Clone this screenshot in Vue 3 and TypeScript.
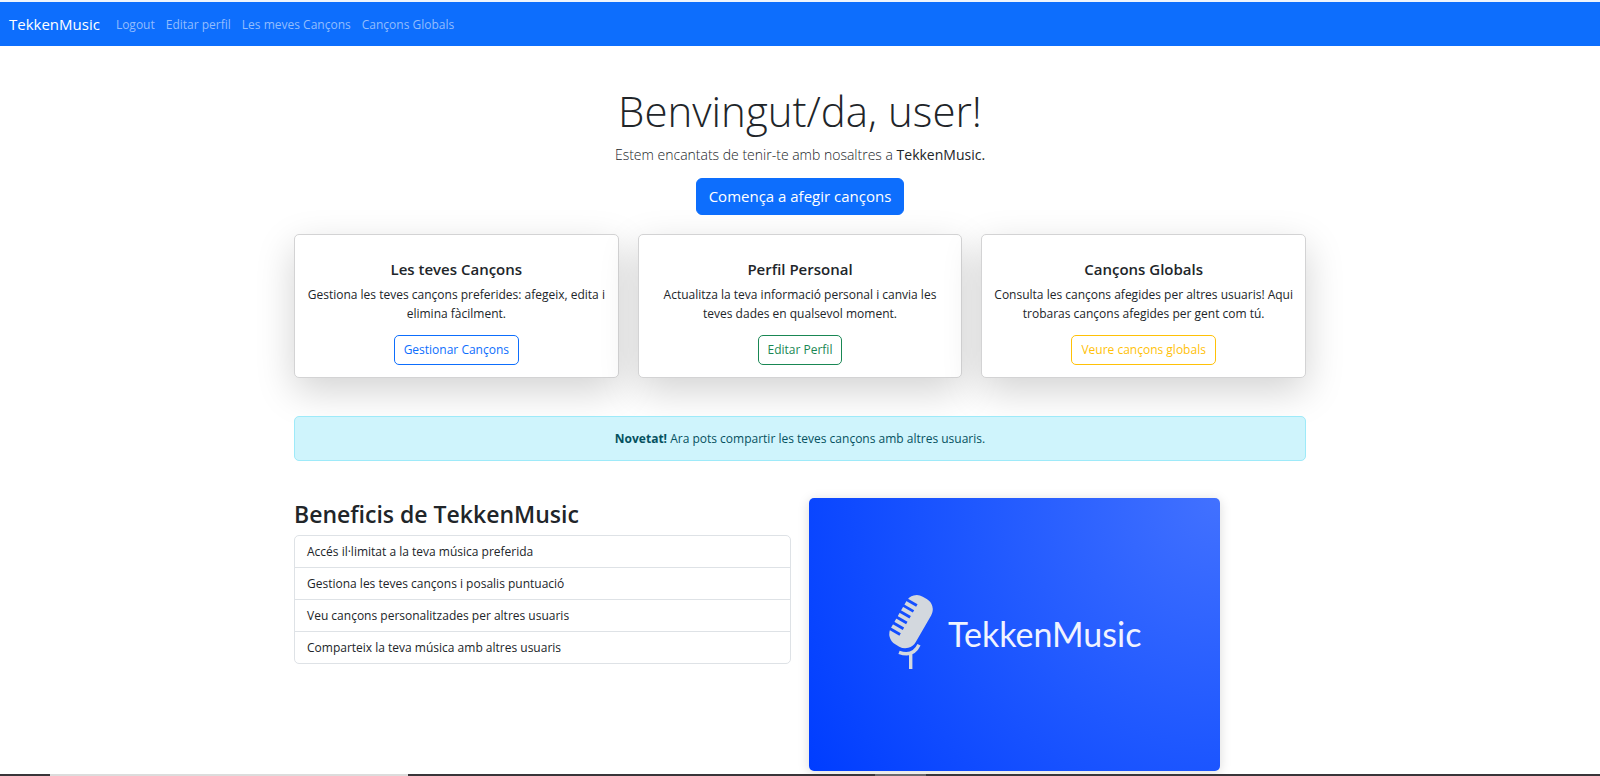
<script setup lang="ts">
interface NavLink {
  label: string
  href: string
}

interface FeatureCard {
  title: string
  text: string
  action: string
  href: string
  tone: 'primary' | 'success' | 'warning'
}

const navLinks: NavLink[] = [
  { label: 'Logout', href: '#logout' },
  { label: 'Editar perfil', href: '#perfil' },
  { label: 'Les meves Cançons', href: '#cancons' },
  { label: 'Cançons Globals', href: '#globals' },
]

const cards: FeatureCard[] = [
  {
    title: 'Les teves Cançons',
    text: 'Gestiona les teves cançons preferides: afegeix, edita i elimina fàcilment.',
    action: 'Gestionar Cançons',
    href: '#cancons',
    tone: 'primary',
  },
  {
    title: 'Perfil Personal',
    text: 'Actualitza la teva informació personal i canvia les teves dades en qualsevol moment.',
    action: 'Editar Perfil',
    href: '#perfil',
    tone: 'success',
  },
  {
    title: 'Cançons Globals',
    text: 'Consulta les cançons afegides per altres usuaris! Aqui trobaras cançons afegides per gent com tú.',
    action: 'Veure cançons globals',
    href: '#globals',
    tone: 'warning',
  },
]

const benefits: string[] = [
  'Accés il·limitat a la teva música preferida',
  'Gestiona les teves cançons i posalis puntuació',
  'Veu cançons personalitzades per altres usuaris',
  'Comparteix la teva música amb altres usuaris',
]

const slots: number[] = [-18.3, -11.6, -4.9, 1.8, 8.5, 15.2]
</script>

<template>
  <div class="page">
    <nav class="navbar">
      <a class="brand" href="#inici">TekkenMusic</a>
      <ul class="nav-list">
        <li v-for="link in navLinks" :key="link.href">
          <a class="nav-link" :href="link.href">{{ link.label }}</a>
        </li>
      </ul>
    </nav>

    <main class="container">
      <header class="hero">
        <h1>Benvingut/da, user!</h1>
        <p class="lead">Estem encantats de tenir-te amb nosaltres a <strong>TekkenMusic.</strong></p>
        <a class="btn btn-large" href="#afegir">Comença a afegir cançons</a>
      </header>

      <section class="cards">
        <article v-for="card in cards" :key="card.title" class="card">
          <h5>{{ card.title }}</h5>
          <p>{{ card.text }}</p>
          <a class="btn btn-outline" :class="card.tone" :href="card.href">{{ card.action }}</a>
        </article>
      </section>

      <div class="alert" role="alert">
        <strong>Novetat!</strong> Ara pots compartir les teves cançons amb altres usuaris.
      </div>

      <section class="about">
        <div class="benefits">
          <h2>Beneficis de TekkenMusic</h2>
          <ul class="list-group">
            <li v-for="benefit in benefits" :key="benefit">{{ benefit }}</li>
          </ul>
        </div>
        <div>
          <svg class="banner" viewBox="0 0 411 273" role="img" aria-label="TekkenMusic">
            <defs>
              <radialGradient id="banner-fill" gradientUnits="userSpaceOnUse" cx="411" cy="0" r="490">
                <stop offset="0" stop-color="#4271ff" />
                <stop offset="0.5" stop-color="#1f58ff" />
                <stop offset="1" stop-color="#003dff" />
              </radialGradient>
              <mask id="mic-slots">
                <rect x="-30" y="-40" width="60" height="80" fill="#fff" />
                <rect v-for="y in slots" :key="y" x="-18" :y="y" width="15" height="2.8" fill="#000" />
              </mask>
            </defs>
            <rect width="411" height="273" fill="url(#banner-fill)" />
            <g transform="translate(102 123.7) rotate(30)">
              <rect x="-14.3" y="-27.5" width="28.6" height="55" rx="12" fill="#d3d8de" mask="url(#mic-slots)" />
            </g>
            <path d="M90 154.3Q104 159.5 110 146.8M101.7 156V171" fill="none" stroke="#d3d8de" stroke-width="3.4" />
            <text class="banner-text" x="139" y="149">TekkenMusic</text>
          </svg>
        </div>
      </section>
    </main>

    <div class="dock">
      <span class="dock-window"></span>
      <span class="dock-item"></span>
    </div>
  </div>
</template>

<style>
body {
  margin: 0;
  background: #fff;
}
</style>

<style scoped>
.page {
  display: flex;
  flex-direction: column;
  min-height: 100vh;
  box-sizing: border-box;
  border-top: 2px solid #eef4fc;
  color: #212529;
  font: 12px/19px "Open Sans", "Noto Sans", sans-serif;
}

a {
  text-decoration: none;
}

h1,
h2,
h5,
p,
ul {
  margin: 0;
  padding: 0;
}

ul {
  list-style: none;
}

.navbar {
  display: flex;
  align-items: center;
  gap: 16px;
  height: 44px;
  padding: 0 9px;
  background: #0d6efd;
}

.brand {
  color: #fff;
  font-size: 15px;
}

.nav-list {
  display: flex;
  gap: 11px;
}

.nav-link {
  color: #92bdfe;
}

.container {
  flex: 1;
  width: 100%;
  max-width: 1012px;
  margin: 0 auto;
  padding-top: 38px;
}

.hero {
  display: flex;
  flex-direction: column;
  align-items: center;
  text-align: center;
}

h1 {
  font-size: 42px;
  line-height: 53px;
  font-weight: 300;
}

.lead {
  margin: 6px 0 12px;
  font-size: 14px;
  line-height: 23px;
  font-weight: 300;
}

.lead strong {
  font-weight: 400;
}

.btn {
  display: inline-block;
  border: 1px solid;
  border-radius: 5px;
}

.btn-large {
  padding: 6px 12px;
  border-color: #0d6efd;
  border-radius: 6px;
  background: #0d6efd;
  color: #fff;
  font-size: 15px;
  line-height: 23px;
}

.btn-outline {
  padding: 5px 9px;
  line-height: 18px;
}

.primary {
  color: #0d6efd;
}

.success {
  color: #198754;
}

.warning {
  color: #ffc107;
}

.cards {
  display: grid;
  grid-template-columns: repeat(3, 1fr);
  gap: 19px;
  margin-top: 19px;
}

.card {
  padding: 25px 12px 12px;
  border: 1px solid #d3d3d4;
  border-radius: 5px;
  background: #fff;
  box-shadow: 0 13px 38px rgba(0, 0, 0, 0.175);
  text-align: center;
}

h5 {
  font-size: 15px;
  line-height: 19px;
  font-weight: 600;
}

.card p {
  margin: 6px 0 12px;
}

.alert {
  position: relative;
  margin: 38px 0 37px;
  padding: 12px;
  border: 1px solid #9eeaf9;
  border-radius: 5px;
  background: #cff4fc;
  color: #055160;
  text-align: center;
}

.about {
  display: grid;
  grid-template-columns: repeat(2, 1fr);
  gap: 18px;
}

h2 {
  margin-bottom: 5px;
  font-size: 23px;
  line-height: 32px;
  font-weight: 600;
}

.list-group {
  border: 1px solid #dee2e6;
  border-radius: 5px;
}

.list-group li {
  padding: 6px 12px;
}

.list-group li + li {
  border-top: 1px solid #dee2e6;
}

.banner {
  display: block;
  width: 411px;
  max-width: 100%;
  border-radius: 5px;
  box-shadow: 0 2px 12px rgba(0, 0, 0, 0.15);
}

.banner-text {
  fill: #f0f3ff;
  font: 34px Lato, sans-serif;
}

.dock {
  display: grid;
  grid-template-columns: 50fr 358fr 467fr 51fr 674fr;
  height: 2px;
  background: #39353a;
}

.dock-window {
  grid-column: 2;
  background: #dcdcdc;
}

.dock-item {
  grid-column: 4;
  background: #6b686c;
}
</style>
